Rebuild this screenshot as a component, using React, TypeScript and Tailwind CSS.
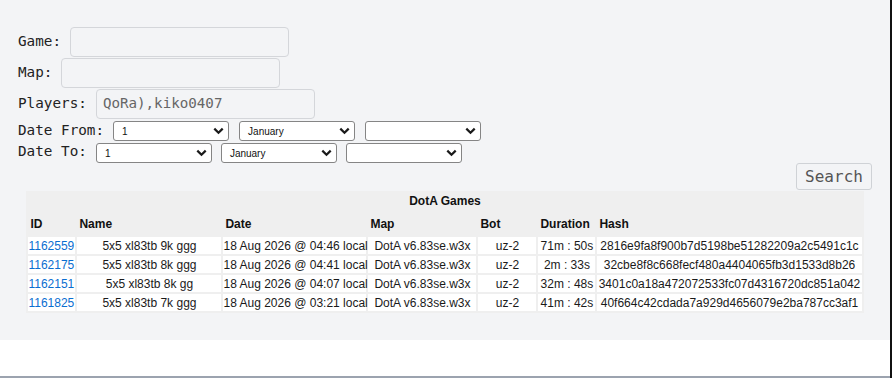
import React from "react";

const mono = { fontFamily: '"DejaVu Sans Mono", monospace' };

function Chevron() {
  return (
    <svg
      className="pointer-events-none absolute right-[5px] top-1/2 -translate-y-1/2"
      width="11"
      height="8"
      viewBox="0 0 11 8"
    >
      <path d="M1.3 1.6 L5.5 5.8 L9.7 1.6" fill="none" stroke="#1a1a1a" strokeWidth="2.2" />
    </svg>
  );
}

function Sel({ value }: { value: string }) {
  return (
    <div className="relative w-[116px] h-[20px]">
      <div className="w-full h-full bg-white border border-[#858585] rounded-[3px] pl-[8px] flex items-center text-[10px] text-[#111] font-['Liberation_Sans',sans-serif]">
        {value}
      </div>
      <Chevron />
    </div>
  );
}

const rows = [
  ["1162559", "5x5 xl83tb 9k ggg", "18 Aug 2026 @ 04:46 local", "DotA v6.83se.w3x", "uz-2", "71m : 50s", "2816e9fa8f900b7d5198be51282209a2c5491c1c"],
  ["1162175", "5x5 xl83tb 8k ggg", "18 Aug 2026 @ 04:41 local", "DotA v6.83se.w3x", "uz-2", "2m : 33s", "32cbe8f8c668fecf480a4404065fb3d1533d8b26"],
  ["1162151", "5x5 xl83tb 8k gg", "18 Aug 2026 @ 04:07 local", "DotA v6.83se.w3x", "uz-2", "32m : 48s", "3401c0a18a472072533fc07d4316720dc851a042"],
  ["1161825", "5x5 xl83tb 7k ggg", "18 Aug 2026 @ 03:21 local", "DotA v6.83se.w3x", "uz-2", "41m : 42s", "40f664c42cdada7a929d4656079e2ba787cc3af1"],
];

export default function App() {
  return (
    <div className="w-[892px] h-[378px] flex bg-white overflow-hidden">
      <div className="flex-1 flex flex-col">
        <div className="h-[340px] bg-[#f3f4f6] pt-[27px] px-[18px] flex flex-col">
          <div className="flex flex-col gap-[1px] text-[14.3px] text-[#222]" style={mono}>
            <div className="flex items-center h-[30px] gap-[9px]">
              <span>Game:</span>
              <div className="w-[219px] h-[30px] border border-[#d4d6da] rounded-[4px]" />
            </div>
            <div className="flex items-center h-[30px] gap-[9px]">
              <span>Map:</span>
              <div className="w-[219px] h-[30px] border border-[#d4d6da] rounded-[4px]" />
            </div>
            <div className="flex items-center h-[30px] gap-[9px]">
              <span>Players:</span>
              <div className="w-[219px] h-[30px] border border-[#d4d6da] rounded-[4px] flex items-center px-[6px] text-[14.2px] text-[#666]">
                QoRa),kiko0407
              </div>
            </div>
            <div className="flex items-center h-[20px] mt-[1px] gap-[9px]">
              <span className="-mt-[1px]">Date From:</span>
              <div className="flex gap-[10px]">
                <Sel value="1" />
                <Sel value="January" />
                <Sel value="" />
              </div>
            </div>
            <div className="flex items-center h-[20px] mt-[1px] gap-[9px]">
              <span className="-mt-[2px]">Date To:</span>
              <div className="flex gap-[9px]">
                <Sel value="1" />
                <Sel value="January" />
                <Sel value="" />
              </div>
            </div>
          </div>
          <div className="flex justify-end">
            <div
              className="w-[76px] h-[27px] border border-[#cfd2d6] rounded-[3px] flex items-center justify-center text-[16px] text-[#555]"
              style={mono}
            >
              Search
            </div>
          </div>
          <table className="mt-[1px] mx-auto w-[837px] table-fixed border-separate border-spacing-[2px] bg-[#efefef] text-[12px] leading-[14px] text-[#1a1a1a] font-['Liberation_Sans',Arial,sans-serif]">
            <colgroup>
              <col className="w-[47px]" />
              <col className="w-[144px]" />
              <col className="w-[143px]" />
              <col className="w-[108px]" />
              <col className="w-[58px]" />
              <col className="w-[57px]" />
              <col className="w-[264px]" />
            </colgroup>
            <thead>
              <tr className="h-[15px]">
                <th colSpan={7} className="p-0 text-center font-bold text-[#111]">
                  DotA Games
                </th>
              </tr>
              <tr className="h-[25px]">
                {["ID", "Name", "Date", "Map", "Bot", "Duration", "Hash"].map((h) => (
                  <th key={h} className="p-0 pl-[2px] pt-[2px] text-left font-bold text-[#111] align-middle">
                    {h}
                  </th>
                ))}
              </tr>
            </thead>
            <tbody>
              {rows.map((r) => (
                <tr key={r[0]} className="h-[17px]">
                  {r.map((c, i) => (
                    <td
                      key={i}
                      className={
                        "p-0 bg-white whitespace-nowrap " +
                        (i === 0 ? "text-left text-[#0a6ed1]" : "text-center")
                      }
                    >
                      {c}
                    </td>
                  ))}
                </tr>
              ))}
            </tbody>
          </table>
        </div>
        <div className="flex-1 bg-white" />
        <div className="h-[2px] bg-[#9ca3af]" />
      </div>
      <div className="w-[2px] bg-[#111]" />
    </div>
  );
}
